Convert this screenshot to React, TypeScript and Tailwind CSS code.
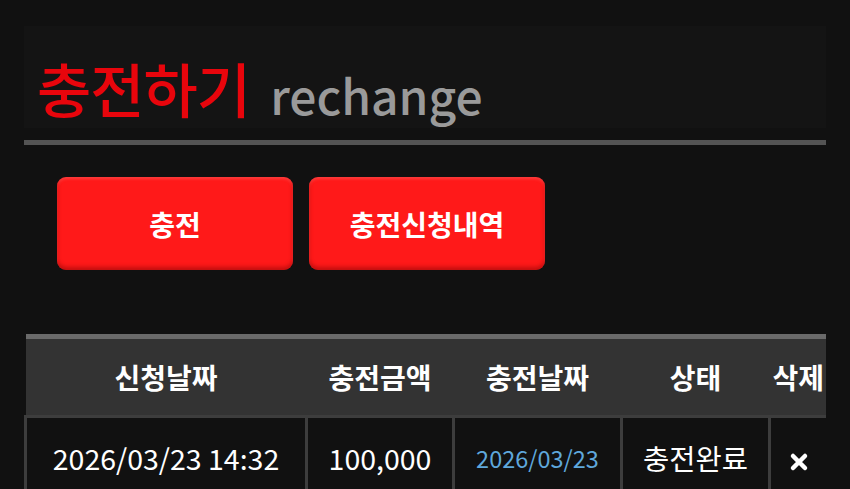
const rows = [
  { reqDate: "2026/03/23 14:32", amount: "100,000", doneDate: "2026/03/23", status: "충전완료" },
];

const font = { fontFamily: '"Noto Sans CJK KR", "Noto Sans", sans-serif' };

function ChargeButton({ label }: { label: string }) {
  return (
    <button className="w-[236px] h-[93px] rounded-[9px] bg-[#ff1919] text-white text-[28px] font-bold shadow-[inset_0_-3px_4px_rgba(120,0,0,0.45),inset_0_2px_3px_rgba(255,120,120,0.4)]">
      {label}
    </button>
  );
}

export default function App() {
  return (
    <div className="min-h-screen w-full bg-[#111111] px-[24px] pt-[26px] overflow-hidden" style={font}>
      {/* title */}
      <div className="h-[102px] bg-[#141414] flex items-end pb-[11px] pl-[13px]">
        <h1 className="text-[59px] leading-none font-medium text-[#e8050c] tracking-[-1px]">충전하기</h1>
        <span className="ml-[20px] text-[48px] leading-none font-medium text-[#9a9a9a] relative top-[1px]">rechange</span>
      </div>
      <div className="mt-[12px] h-[5px] bg-[#545454]" />

      {/* actions */}
      <div className="mt-[32px] pl-[33px] flex gap-[16px]">
        <ChargeButton label="충전" />
        <ChargeButton label="충전신청내역" />
      </div>

      {/* history */}
      <div className="mt-[64px] w-[802px] overflow-hidden">
        <table className="w-[802px] border-collapse table-fixed text-white">
          <colgroup>
            <col className="w-[281px]" />
            <col className="w-[147px]" />
            <col className="w-[168px]" />
            <col className="w-[148px]" />
            <col className="w-[58px]" />
          </colgroup>
          <thead>
            <tr className="h-[80px] bg-[#333333] border-t-[5px] border-[#6a6a6a] border-b-[3px] border-b-[#0a0a0a] text-[28px] font-bold">
              <th>신청날짜</th>
              <th>충전금액</th>
              <th>충전날짜</th>
              <th>상태</th>
              <th className="text-left pl-[3px] whitespace-nowrap">삭제</th>
            </tr>
          </thead>
          <tbody>
            {rows.map((r) => (
              <tr key={r.reqDate} className="h-[84px] text-[28.5px]">
                <td className="border-[3px] border-[#3d3d3d] text-center">{r.reqDate}</td>
                <td className="border-[3px] border-[#3d3d3d] text-center">{r.amount}</td>
                <td className="border-[3px] border-[#3d3d3d] text-center text-[23.5px] text-[#5fa8dc]">{r.doneDate}</td>
                <td className="border-[3px] border-[#3d3d3d] text-center">{r.status}</td>
                <td className="border-[3px] border-[#3d3d3d] text-center">
                  <svg viewBox="0 0 20 20" className="w-[20px] h-[20px] inline-block" fill="none">
                    <path d="M4 4 L16 16 M16 4 L4 16" stroke="white" strokeWidth="4.5" strokeLinecap="round" />
                  </svg>
                </td>
              </tr>
            ))}
          </tbody>
        </table>
      </div>
    </div>
  );
}
